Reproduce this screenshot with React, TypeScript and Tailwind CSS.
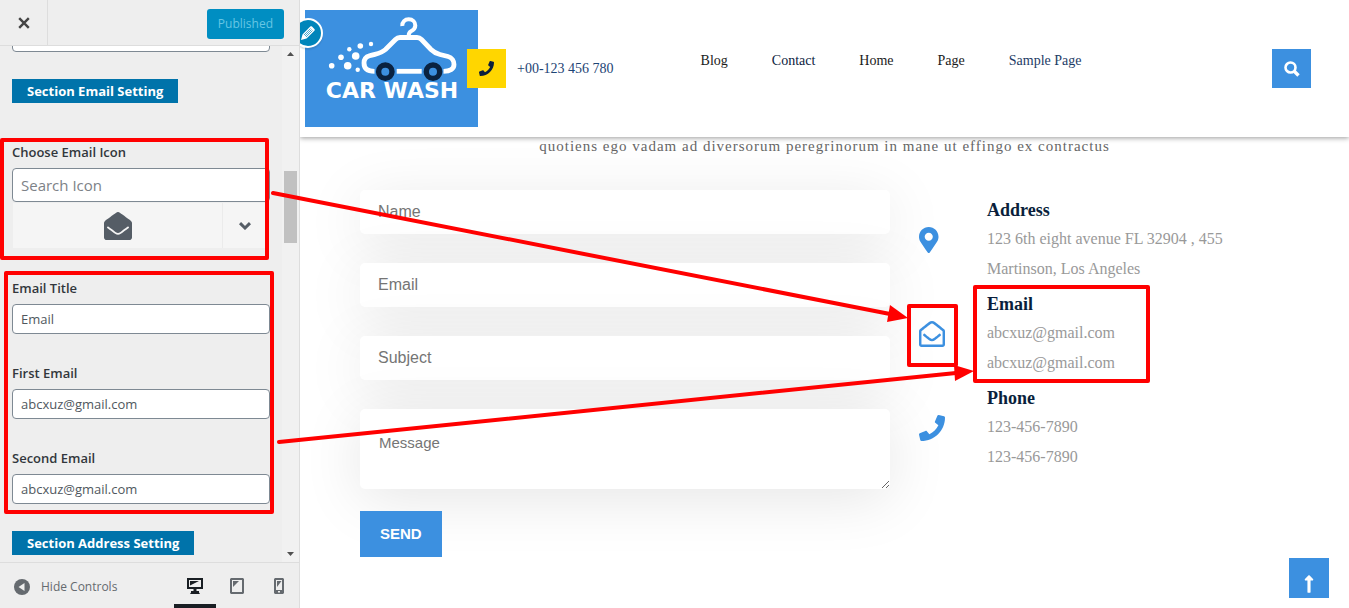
import { useState } from 'react'
import {
  FaEnvelopeOpen,
  FaLongArrowAltUp,
  FaMapMarkerAlt,
  FaPhone,
  FaRegEnvelopeOpen,
} from 'react-icons/fa'

const menu = [
  { label: 'Blog', color: 'text-[#1b1b1b]' },
  { label: 'Contact', color: 'text-[#0b2240]' },
  { label: 'Home', color: 'text-[#1b1b1b]' },
  { label: 'Page', color: 'text-[#1b1b1b]' },
  { label: 'Sample Page', color: 'text-[#1d3c66]' },
]

const contacts = [
  {
    title: 'Address',
    icon: FaMapMarkerAlt,
    lines: ['123 6th eight avenue FL 32904 , 455', 'Martinson, Los Angeles'],
  },
  {
    title: 'Email',
    icon: FaRegEnvelopeOpen,
    lines: ['abcxuz@gmail.com', 'abcxuz@gmail.com'],
  },
  {
    title: 'Phone',
    icon: FaPhone,
    lines: ['123-456-7890', '123-456-7890'],
  },
]

const formFields = ['Name', 'Email', 'Subject']

function SectionBadge({ children }: { children: string }) {
  return (
    <h3 className="w-fit bg-[#0073aa] px-[15px] text-[13px] leading-6 font-bold text-white">
      {children}
    </h3>
  )
}

function TextControl({ id, label, initial }: { id: string; label: string; initial: string }) {
  const [value, setValue] = useState(initial)

  return (
    <div>
      <label htmlFor={id} className="block text-[13px] leading-6 font-semibold text-[#32373c]">
        {label}
      </label>
      <input
        id={id}
        value={value}
        onChange={(e) => setValue(e.target.value)}
        className="mt-1 block h-[30px] w-full rounded-[4px] border border-[#7e8993] bg-white px-2 text-[13px] text-[#50575e]"
      />
    </div>
  )
}

function Customizer() {
  return (
    <aside className="flex w-[300px] shrink-0 flex-col border-r border-[#ddd] bg-[#eee] font-['Open_Sans','Noto_Sans',sans-serif]">
      <div className="flex h-[46px] shrink-0 items-end justify-between border-b border-[#ddd] pr-[15px]">
        <button
          aria-label="Close"
          className="flex h-full w-12 items-center justify-center border-r border-[#ddd] text-[#444]"
        >
          <svg className="size-3" viewBox="0 0 12 12" stroke="currentColor" strokeWidth="2.4">
            <path d="M1.2 1.2l9.6 9.6M10.8 1.2l-9.6 9.6" />
          </svg>
        </button>
        <button className="mb-1.5 h-[30px] rounded-[3px] bg-[#008ec2] px-[11px] text-[12px] text-[#66c6e4]">
          Published
        </button>
      </div>

      <div className="flex min-h-0 flex-1">
        <div className="min-w-0 flex-1 overflow-hidden pr-3 pl-3">
          <input
            aria-label="Phone number"
            className="-mt-6 block h-[30px] w-full rounded-[4px] border border-[#7e8993] bg-white px-2"
          />

          <div className="pt-[27px]">
            <SectionBadge>Section Email Setting</SectionBadge>
          </div>

          <div className="mt-[37px]">
            <label
              htmlFor="email-icon"
              className="block text-[13px] leading-6 font-semibold text-[#32373c]"
            >
              Choose Email Icon
            </label>
            <input
              id="email-icon"
              placeholder="Search Icon"
              className="mt-1 block h-[34px] w-full rounded-[4px] border border-[#7e8993] bg-white px-2 text-[15px] placeholder:text-[#7d8287]"
            />
            <div className="mt-px mr-1 ml-px flex h-[45px] bg-[#f5f5f5] text-[#555d66]">
              <button
                aria-label="Selected icon"
                className="flex flex-1 items-center justify-center border-r border-[#ebebeb]"
              >
                <FaEnvelopeOpen size={28} />
              </button>
              <button aria-label="Open icon list" className="flex w-[43px] items-center justify-center">
                <svg className="h-2 w-3" viewBox="0 0 12 8" fill="none" stroke="currentColor" strokeWidth="3">
                  <path d="M1 1.200l5 4.800 5-4.800" />
                </svg>
              </button>
            </div>
          </div>

          <div className="mt-7 flex flex-col gap-[27px]">
            <TextControl id="email-title" label="Email Title" initial="Email" />
            <TextControl id="first-email" label="First Email" initial="abcxuz@gmail.com" />
            <TextControl id="second-email" label="Second Email" initial="abcxuz@gmail.com" />
            <SectionBadge>Section Address Setting</SectionBadge>
          </div>
        </div>

        {/* Scrollbar */}
        <div className="flex w-[17px] flex-col items-center bg-[#f1f1f1] py-1.5 text-[#505050]">
          <svg className="h-1 w-[7px]" viewBox="0 0 7 4" fill="currentColor">
            <path d="M3.5 0L7 4H0z" />
          </svg>
          <div className="mt-[115px] h-[72px] w-[13px] bg-[#c1c1c1]" />
          <svg className="mt-auto h-1 w-[7px]" viewBox="0 0 7 4" fill="currentColor">
            <path d="M0 0h7L3.5 4z" />
          </svg>
        </div>
      </div>

      <div className="flex h-[46px] shrink-0 items-stretch justify-between border-t border-[#ddd]">
        <button className="flex items-center gap-[11px] pt-0.5 pl-[14px] text-[12px] text-[#656a6f]">
          <svg className="size-4" viewBox="0 0 16 16">
            <circle cx="8" cy="8" r="8" fill="#656a6f" />
            <path d="M10.5 4v8L4.5 8z" fill="#eee" />
          </svg>
          Hide Controls
        </button>
        <div className="flex text-[#656a6f]">
          <button
            aria-label="Desktop preview"
            className="flex w-[42px] items-center justify-center border-b-4 border-[#191e23] pt-1 text-[#191e23]"
          >
            <svg className="size-4" viewBox="0 0 16 16" fill="currentColor">
              <path fillRule="evenodd" d="M0 0h16v11H9.500v2h2.500v1.500l1 1.500H3l1-1.500V13h2.500v-2H0zM2 2v7h12V2z" />
              <path d="M3 3h9L3 7.500z" />
            </svg>
          </button>
          <button aria-label="Tablet preview" className="flex w-[42px] items-center justify-center">
            <svg className="h-4 w-[14px]" viewBox="0 0 14 16" fill="currentColor">
              <path fillRule="evenodd" d="M1 0h12l1 1v14l-1 1H1l-1-1V1zM2 2v12h10V2z" />
              <path d="M3 3h6L3 9z" />
            </svg>
          </button>
          <button aria-label="Mobile preview" className="flex w-[41px] items-center justify-center">
            <svg className="h-4 w-[10px]" viewBox="0 0 10 16" fill="currentColor">
              <path fillRule="evenodd" d="M1 0h8l1 1v14l-1 1H1l-1-1V1zM2 2v10h6V2zM4 13v1.500h2V13z" />
              <path d="M3 3h4.500L3 9z" />
            </svg>
          </button>
        </div>
      </div>
    </aside>
  )
}

function Logo() {
  return (
    <svg className="h-[117px] w-[173px]" viewBox="0 0 173 117" role="img" aria-label="Car Wash">
      <rect width="173" height="117" fill="#3c90e0" />
      <g fill="none" stroke="#fff" strokeWidth="4.800">
        <path d="M97.300 16C97 12 100 9.300 103.700 9.300c4 0 6.600 3 6.600 6.200 0 3.200-2 4.600-4.300 5.800-1.700.900-2.300 1.900-2.300 4.200" strokeWidth="4" />
        <path d="M69.500 61.300C61.500 61.300 59 58 59 53c0-4 2-6.200 5.500-7.200 9-2.600 11.500-2.400 16-6.300L90.500 29.500c1.500-1.500 2.500-2 4.500-2h17c2 0 3 .500 4.500 2l9.500 10c3 3 5 4 9 5l8 2c4 1 6 4.500 6 8 0 4-3.500 6.800-10.500 6.800" />
        <path d="M91.700 61.300h25" />
      </g>
      <g fill="none" stroke="#0a2240" strokeWidth="5.400">
        <circle cx="80.300" cy="61.700" r="6.700" />
        <circle cx="128" cy="61.700" r="6.700" />
      </g>
      <g fill="#fff">
        <circle cx="26.700" cy="55.700" r="2.800" />
        <circle cx="36" cy="47.300" r="2.800" />
        <circle cx="44.300" cy="39.300" r="2.200" />
        <circle cx="55.300" cy="36" r="2.800" />
        <circle cx="66" cy="34" r="2.200" />
        <circle cx="50.700" cy="46" r="3.800" />
        <circle cx="42.700" cy="55.700" r="3.800" />
        <circle cx="52.700" cy="59.700" r="2.200" />
        <text x="87" y="88" textAnchor="middle" className="font-['DejaVu_Sans',sans-serif] text-[22px] font-bold">
          CAR WASH
        </text>
      </g>
    </svg>
  )
}

function SiteHeader() {
  return (
    <header className="relative z-10 flex h-[137px] shrink-0 items-center bg-white pr-[38px] pl-[5px] shadow-[0_1px_5px_rgba(0,0,0,0.4)]">
      <a href="#home">
        <Logo />
      </a>
      <button
        aria-label="Edit logo"
        className="absolute top-[18px] -left-[7px] flex size-[30px] items-center justify-center rounded-full border-2 border-white bg-[#0085ba] shadow-[0_2px_1px_rgba(46,68,83,0.15)]"
      >
        <svg className="size-4" viewBox="0 0 16 16">
          <path d="M1 15l1.500-5.500L10.300 1.600c.500-.500 1.200-.500 1.700 0L14.400 4c.500.500.500 1.200 0 1.700L6.500 13.500z" fill="#fff" />
          <path d="M4 10l6.500-6.500M6 12l6.500-6.500M5 11l6.500-6.500" stroke="#0085ba" strokeWidth=".7" />
        </svg>
      </button>
      <div className="z-10 -ml-[11px] flex items-center gap-[11px]">
        <span className="flex size-[39px] items-center justify-center bg-[#ffd600] text-[#0a1f3c]">
          <FaPhone size={15} />
        </span>
        <a href="tel:+00123456780" className="text-[14px] text-[#1d4474]">
          +00-123 456 780
        </a>
      </div>
      <nav className="mb-4 ml-[87px] flex gap-11 text-[14px]">
        {menu.map((item) => (
          <a key={item.label} href="#" className={item.color}>
            {item.label}
          </a>
        ))}
      </nav>
      <button
        aria-label="Search"
        className="ml-auto flex size-[39px] items-center justify-center bg-[#3c90e0] text-white"
      >
        <svg className="size-4" viewBox="0 0 16 16" fill="none" stroke="currentColor">
          <circle cx="6.500" cy="6.500" r="5" strokeWidth="2.600" />
          <path d="M10 10l4.500 4.500" strokeWidth="3.400" />
        </svg>
      </button>
    </header>
  )
}

function ContactForm() {
  return (
    <form className="flex flex-col items-start font-['Liberation_Sans',Arial,sans-serif]">
      <div className="flex w-full flex-col gap-[29px]">
        {formFields.map((name) => (
          <input
            key={name}
            aria-label={name}
            placeholder={name}
            className="h-11 w-full rounded-[5px] bg-white px-[18px] text-[16px] shadow-[0_10px_60px_rgba(0,0,0,0.1)] placeholder:text-[#757575]"
          />
        ))}
        <textarea
          aria-label="Message"
          placeholder="Message"
          className="h-20 w-full rounded-[5px] bg-white px-[19px] py-[25px] text-[15px] leading-[18px] shadow-[0_10px_60px_rgba(0,0,0,0.1)] placeholder:text-[#757575]"
        />
      </div>
      <button className="mt-[22px] h-[46px] bg-[#3c90e0] px-5 text-[15px] font-bold text-white">SEND</button>
    </form>
  )
}

function ContactInfo() {
  return (
    <ul className="mt-1.5 flex flex-col gap-1.5">
      {contacts.map(({ title, icon: Icon, lines }) => (
        <li key={title} className="flex items-center">
          <span className="w-[68px] shrink-0 text-[#3c90e0]">
            <Icon size={26} preserveAspectRatio="xMinYMid meet" />
          </span>
          <div>
            <h4 className="text-[18px] leading-7 font-bold text-[#0a1f3c]">{title}</h4>
            {lines.map((line, i) => (
              <p key={i} className="text-[16px] leading-[30px] text-[#999]">
                {line}
              </p>
            ))}
          </div>
        </li>
      ))}
    </ul>
  )
}

// Red call-outs that link the settings to the preview
function Annotations() {
  return (
    <svg
      className="pointer-events-none absolute top-0 left-0 z-20 h-[608px] w-[1349px]"
      viewBox="0 0 1349 608"
      aria-hidden="true"
    >
      <g fill="none" stroke="#f00" strokeWidth="4" strokeLinejoin="round">
        <rect x="2" y="140" width="265" height="118" />
        <rect x="6" y="273" width="266" height="239" />
        <rect x="909" y="306" width="47" height="59" />
        <rect x="975" y="287" width="173" height="94" />
        <path d="M273 193L890 314M279 442L956 373" strokeLinecap="round" />
      </g>
      <g fill="#f00">
        <path d="M908 318L890 305L887 322z" />
        <path d="M974 371L954 365L955 381z" />
      </g>
    </svg>
  )
}

export default function App() {
  return (
    <div className="relative flex h-screen overflow-hidden bg-white">
      <Customizer />

      <main className="relative flex min-w-0 flex-1 flex-col overflow-hidden font-['Liberation_Serif','Times_New_Roman',serif]">
        <SiteHeader />

        <section>
          <p className="text-center text-[15px] leading-[18px] tracking-[1px] text-[#666]">
            quotiens ego vadam ad diversorum peregrinorum in mane ut effingo ex contractus
          </p>
          <div className="mt-[35px] grid grid-cols-[530fr_370fr] gap-[29px] px-[60px]">
            <ContactForm />
            <ContactInfo />
          </div>
        </section>

        <a
          href="#top"
          aria-label="Back to top"
          className="absolute right-5 bottom-[10px] flex size-10 items-end justify-center bg-[#3c90e0] pb-1 text-white"
        >
          <FaLongArrowAltUp size={20} />
        </a>
      </main>

      <Annotations />
    </div>
  )
}
